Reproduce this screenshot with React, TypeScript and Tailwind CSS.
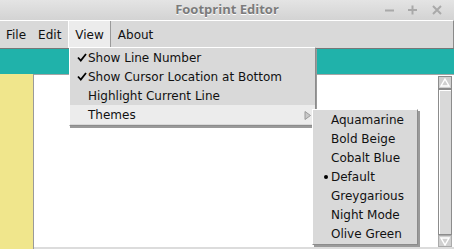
import React from "react";

const font = { fontFamily: '"DejaVu Sans", sans-serif' };

function Check() {
  return (
    <svg width="10" height="9" viewBox="0 0 10 9" className="block">
      <path d="M1 4.5 L3.8 7.5 L9 1" fill="none" stroke="#000" strokeWidth="1.8" />
    </svg>
  );
}

export default function App() {
  const themes = ["Aquamarine", "Bold Beige", "Cobalt Blue", "Default", "Greygarious", "Night Mode", "Olive Green"];
  return (
    <div className="relative w-[454px] h-[249px] overflow-hidden bg-[#d9d9d9] text-[12px] text-[#111]" style={font}>
      {/* title bar */}
      <div className="relative h-[20px] flex items-center justify-center bg-gradient-to-b from-[#e4e4e4] to-[#d3d3d3]">
        <span
          className="font-bold text-[13px] text-[#7b7b7b] [text-shadow:0_1px_0_#ffffff]"
          style={{ fontFamily: '"Open Sans", sans-serif' }}
        >
          Footprint Editor
        </span>
        <div className="absolute right-0 top-0 h-[20px] flex items-center text-[#a9a9a9]">
          <svg width="12" height="12" viewBox="0 0 12 12" className="mr-[11px]">
            <path d="M1 6.5 H10" stroke="#a9a9a9" strokeWidth="2" />
          </svg>
          <svg width="12" height="12" viewBox="0 0 12 12" className="mr-[12px]">
            <path d="M1 6 H10 M5.5 1.5 V10.5" stroke="#a9a9a9" strokeWidth="2" />
          </svg>
          <svg width="12" height="12" viewBox="0 0 12 12" className="mr-[11px]">
            <path d="M2 2 L10 10 M10 2 L2 10" stroke="#a9a9a9" strokeWidth="2" />
          </svg>
        </div>
      </div>
      {/* menu bar */}
      <div className="h-[28px] flex items-stretch border-t border-white border-r border-r-[#8a8a8a] bg-[#d9d9d9]">
        <div className="pl-[6px] pr-[6px] flex items-center">File</div>
        <div className="px-[6px] flex items-center">Edit</div>
        <div className="ml-[1px] px-[6px] flex items-center bg-[#ececec] border-l border-white border-r border-r-[#9a9a9a]">View</div>
        <div className="px-[7px] flex items-center">About</div>
      </div>
      {/* teal toolbar */}
      <div className="h-[26px] bg-[#20b2aa] border-t border-[#777]" />
      {/* content */}
      <div className="flex h-[175px]">
        <div className="w-[34px] bg-[#f0e68c] border-r border-[#9a9a9a]" />
        <div className="flex-1 flex bg-white border-t border-[#a5a5a5] border-b-2 border-b-[#dcdcdc]">
          <div className="flex-1" />
          <div className="w-[14px] mt-[1px] mr-[2px] mb-0 flex flex-col">
            <div className="h-[13px] bg-[#d0d0d0] border border-[#8c8c8c] flex items-center justify-center">
              <svg width="10" height="9" viewBox="0 0 10 9">
                <path d="M5 1 L9 8 L1 8 Z" fill="#d0d0d0" stroke="#ffffff" strokeWidth="1.4" />
              </svg>
            </div>
            <div className="flex-1 bg-[#d9d9d9] border border-[#8c8c8c] shadow-[inset_1px_1px_0_#ffffff]" />
            <div className="h-[12px] bg-[#d0d0d0] border border-[#aaaaaa] flex items-center justify-center">
              <svg width="10" height="9" viewBox="0 0 10 9">
                <path d="M1 1 L9 1 L5 8 Z" fill="#d0d0d0" stroke="#ffffff" strokeWidth="1.4" />
              </svg>
            </div>
          </div>
        </div>
      </div>

      {/* View dropdown */}
      <div className="absolute left-[69px] top-[47px] w-[247px] bg-[#d9d9d9] border-t border-l border-white border-r border-b border-r-[#8c8c8c] border-b-[#8c8c8c] shadow-[1px_2px_0_#9a9a9a] pb-[1px]">
        <div className="h-[19px] flex items-center">
          <div className="w-[18px] flex justify-end pr-[1px]"><Check /></div>
          <span>Show Line Number</span>
        </div>
        <div className="h-[19px] flex items-center">
          <div className="w-[18px] flex justify-end pr-[1px]"><Check /></div>
          <span>Show Cursor Location at Bottom</span>
        </div>
        <div className="h-[19px] flex items-center">
          <div className="w-[18px]" />
          <span>Highlight Current Line</span>
        </div>
        <div className="h-[19px] flex items-center bg-[#ececec] relative">
          <div className="w-[18px]" />
          <span>Themes</span>
          <svg width="8" height="9" viewBox="0 0 8 9" className="absolute right-[3px] top-[6px]">
            <path d="M1 0.5 L6.5 4.5 L1 8.5 Z" fill="#c8c8c8" stroke="#9a9a9a" strokeWidth="1" />
          </svg>
        </div>
      </div>

      {/* Themes submenu */}
      <div className="absolute left-[312px] top-[109px] w-[106px] bg-[#d9d9d9] border-t border-l border-white border-r border-b border-r-[#8c8c8c] border-b-[#8c8c8c] shadow-[2px_2px_0_#9a9a9a] pb-[1px]">
        {themes.map((t) => (
          <div key={t} className="h-[19px] flex items-center">
            <div className="w-[18px] flex justify-end pr-[3px]">
              {t === "Default" ? <div className="w-[4px] h-[4px] rounded-full bg-black" /> : null}
            </div>
            <span>{t}</span>
          </div>
        ))}
      </div>
    </div>
  );
}
